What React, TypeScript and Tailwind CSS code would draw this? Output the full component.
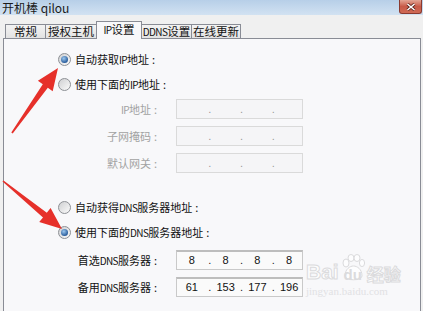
import React from "react";

// narrow latin runs, spaced colon, like the old bitmap ui font
function T({ s }: { s: string }) {
  const parts = s.match(/[A-Za-z0-9]+|:|[^A-Za-z0-9:]+/g) ?? [];
  return (
    <>
      {parts.map((p, i) =>
        /^[A-Za-z0-9]+$/.test(p) ? (
          <span key={i} className="text-[10px] tracking-[-0.6px]">
            {p}
          </span>
        ) : p === ":" ? (
          <span key={i} className="pl-[3px]">
            :
          </span>
        ) : (
          <span key={i}>{p}</span>
        )
      )}
    </>
  );
}

function Radio({ on }: { on?: boolean }) {
  return (
    <span className="flex h-[13px] w-[13px] shrink-0 items-center justify-center rounded-full border border-[#8d9095] bg-gradient-to-br from-[#cfd0d2] to-[#fbfbfb]">
      {on && (
        <span className="h-[7px] w-[7px] rounded-full bg-[radial-gradient(circle_at_40%_35%,#9cc8ef,#2a5d9c_70%)]" />
      )}
    </span>
  );
}

function RadioRow({ on, label, mt }: { on?: boolean; label: string; mt: string }) {
  return (
    <div className={`flex h-[16px] items-center gap-[4px] pl-[54px] ${mt}`}>
      <Radio on={on} />
      <span className="whitespace-nowrap text-[11px] leading-none text-[#111]">
        <T s={label} />
      </span>
    </div>
  );
}

function IpBox({ values, disabled }: { values?: string[]; disabled?: boolean }) {
  const v = values ?? ["", "", "", ""];
  const dot = disabled ? "text-[#9a9a9a]" : "text-[#222]";
  return (
    <div
      className={`flex h-[20px] w-[127px] items-center border font-['Liberation_Sans',sans-serif] text-[11px] ${
        disabled
          ? "border-[#dadada] bg-[#f5f5f7]"
          : "border-[#c9c9c9] border-t-[2px] border-t-[#bdbdbd] bg-[#fafafa] text-[#111]"
      }`}
    >
      <span className="flex w-[30px] justify-center">{v[0]}</span>
      {v.slice(1).map((x, i) => (
        <React.Fragment key={i}>
          <span className={`flex w-[6px] justify-center ${dot}`}>.</span>
          <span className="flex w-[26px] justify-center">{x}</span>
        </React.Fragment>
      ))}
    </div>
  );
}

function FieldRow({
  label,
  mt,
  disabled,
  values,
}: {
  label: string;
  mt: string;
  disabled?: boolean;
  values?: string[];
}) {
  return (
    <div className={`flex h-[20px] items-center ${mt}`}>
      <span
        className={`w-[153px] whitespace-nowrap text-right text-[11px] leading-none ${
          disabled ? "text-[#a2a2a2]" : "text-[#111]"
        }`}
      >
        <T s={label} />
      </span>
      <div className="ml-[19px]">
        <IpBox disabled={disabled} values={values} />
      </div>
    </div>
  );
}

const tabs = [
  { name: "常规", w: "w-[41px]" },
  { name: "授权主机", w: "w-[52px]" },
  { name: "IP设置", w: "w-[46px]", active: true },
  { name: "DDNS设置", w: "w-[51px]" },
  { name: "在线更新", w: "w-[50px]" },
];

export default function App() {
  return (
    <div className="relative flex h-[311px] w-[423px] flex-col overflow-hidden bg-[#f0f0f0] font-['Noto_Sans_CJK_SC',sans-serif]">
      {/* title bar */}
      <div className="flex h-[15px] shrink-0 items-start justify-between bg-gradient-to-b from-[#b7cfe8] to-[#d2e2f2]">
        <span className="pl-[2px] pt-[1px] text-[12px] leading-[13px] text-[#1a1a1a]">开机棒 qilou</span>
        <div className="mr-[1px] flex h-[14px] w-[23px] items-center justify-center rounded-b-[3px] border border-t-0 border-[#8a3a30] bg-gradient-to-b from-[#e2a595] via-[#c85a48] to-[#d06a55]">
          <svg width="10" height="8" viewBox="0 0 10 8">
            <path d="M1.5 1 L8.5 7 M8.5 1 L1.5 7" stroke="#5a2018" strokeWidth="3" />
            <path d="M1.5 1 L8.5 7 M8.5 1 L1.5 7" stroke="#fff" strokeWidth="1.6" />
          </svg>
        </div>
      </div>

      {/* tabs */}
      <div className="flex h-[23px] shrink-0 items-end pl-[5px]">
        {tabs.map((t, i) => (
          <div
            key={t.name}
            className={`flex items-center justify-center whitespace-nowrap border border-b-0 border-[#898c95] text-[11.5px] leading-none text-[#111] ${t.w} ${
              i > 0 ? "-ml-px" : ""
            } ${
              t.active
                ? "relative z-10 -mb-px h-[18px] bg-[#f8f8fa] pb-[1px]"
                : "h-[14px] bg-gradient-to-b from-[#f3f3f3] to-[#e2e2e2] pt-[1px]"
            }`}
          >
            <T s={t.name} />
          </div>
        ))}
      </div>

      {/* panel */}
      <div className="ml-[3px] mr-[2px] flex flex-1 flex-col border border-b-0 border-[#898c95] bg-[#f8f8fa]">
        <RadioRow on label="自动获取IP地址:" mt="mt-[12px]" />
        <RadioRow label="使用下面的IP地址:" mt="mt-[9px]" />
        <FieldRow label="IP地址:" mt="mt-[7px]" disabled />
        <FieldRow label="子网掩码:" mt="mt-[7px]" disabled />
        <FieldRow label="默认网关:" mt="mt-[7px]" disabled />
        <RadioRow label="自动获得DNS服务器地址:" mt="mt-[26px]" />
        <RadioRow on label="使用下面的DNS服务器地址:" mt="mt-[9px]" />
        <FieldRow label="首选DNS服务器:" mt="mt-[10px]" values={["8", "8", "8", "8"]} />
        <FieldRow label="备用DNS服务器:" mt="mt-[7px]" values={["61", "153", "177", "196"]} />
      </div>

      {/* watermark */}
      <div className="pointer-events-none absolute left-[306px] top-[254px] flex flex-col items-start opacity-80">
        <div className="flex items-end gap-[2px]">
          <span className="font-['Liberation_Sans',sans-serif] text-[21px] font-bold leading-none text-white [-webkit-text-stroke:1px_#d4d4d6]">
            Bai
          </span>
          <div className="relative flex h-[28px] w-[24px] items-end justify-center">
            <svg className="absolute left-0 top-0" width="24" height="28" viewBox="0 0 24 28">
              <g fill="#fff" stroke="#d4d4d6" strokeWidth="1">
                <ellipse cx="5" cy="9" rx="3" ry="4" />
                <ellipse cx="10" cy="4" rx="3" ry="3.5" />
                <ellipse cx="16" cy="4" rx="3" ry="3.5" />
                <ellipse cx="21" cy="9" rx="2.6" ry="3.6" />
                <path d="M4 22 C4 15 9 12 12.5 12 C16 12 21 15 21 22 C21 27 4 27 4 22 Z" />
              </g>
            </svg>
            <span className="relative font-['Liberation_Sans',sans-serif] text-[15px] font-bold leading-none text-[#d4d4d6]">
              du
            </span>
          </div>
          <span className="text-[17px] font-bold leading-none text-white [-webkit-text-stroke:1px_#d4d4d6]">
            经验
          </span>
        </div>
        <span className="mt-[4px] font-['Liberation_Serif',serif] text-[11px] leading-none text-[#dcdcdf]">
          jingyan.baidu.com
        </span>
      </div>

      {/* red arrows */}
      <svg className="pointer-events-none absolute left-0 top-0" width="423" height="311" viewBox="0 0 423 311">
        <polygon
          fill="#e6302a"
          points="12.7,133.5 47.8,87.7 52.7,91.2 58,68 37.9,80.8 42.8,84.3 11.3,132.5"
        />
        <polygon
          fill="#e6302a"
          points="2.5,181.6 43,217.4 39.2,222.1 62,229 50.6,208.1 46.8,212.8 3.5,180.4"
        />
      </svg>
    </div>
  );
}
